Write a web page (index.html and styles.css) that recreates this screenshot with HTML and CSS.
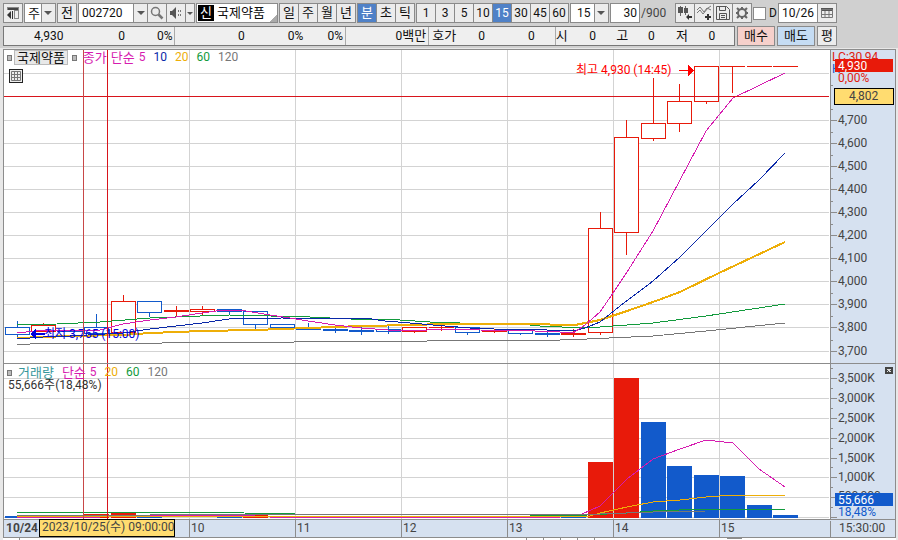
FILE: index.html
```html
<!DOCTYPE html>
<html lang="ko">
<head>
    <meta charset="UTF-8">
    <meta name="viewport" content="width=device-width, initial-scale=1.0">
    <title>국제약품 002720</title>
    <link rel="stylesheet" href="styles.css">
</head>
<body>
    <div class="toolbar">
        <button class="btn icon-btn" aria-label="메뉴">
            <svg width="14" height="14" viewBox="0 0 14 14"><path d="M1 1h12v12H8V4H1z" fill="#888"/><path d="M2 2h10v2H2z" fill="#444"/><path d="M9 5h3v7H9z" fill="#eee"/><path d="M7 5v8L6 13V5zM1 9l4-4v8z" fill="#333"/></svg>
        </button>
        <label class="drop week"><select aria-label="종목 구분"><option>주</option></select></label>
        <button class="btn">전</button>
        <div class="group num">
            <input class="field code-input" type="text" value="002720" aria-label="종목코드">
            <button class="btn arrow" aria-label="최근 종목"></button>
            <button class="btn icon-btn" aria-label="검색">
                <svg width="14" height="14" viewBox="0 0 14 14" fill="none" stroke="#777"><circle cx="5.5" cy="5.5" r="4" stroke-width="1.5"/><path d="M8.500 8.500l4 4" stroke-width="2.5"/></svg>
            </button>
            <button class="btn icon-btn" aria-label="소리">
                <svg width="14" height="14" viewBox="0 0 14 14"><path d="M1 5h2l4-4v12l-4-4H1z" fill="#555"/><path d="M9 4h1v2H9zM11 4h1v2h-1zM9 8h1v2H9zM11 8h1v2h-1z" fill="#777"/></svg>
            </button>
            <button class="btn arrow narrow" aria-label="소리 설정"></button>
        </div>
        <div class="stock"><span class="mark">신</span><span>국제약품</span></div>
        <div class="group">
            <button class="btn">일</button><button class="btn">주</button><button class="btn">월</button><button class="btn">년</button>
        </div>
        <div class="group">
            <button class="btn on">분</button><button class="btn">초</button><button class="btn">틱</button>
        </div>
        <div class="group num">
            <button class="btn">1</button><button class="btn">3</button><button class="btn">5</button><button class="btn">10</button><button class="btn on">15</button><button class="btn">30</button><button class="btn">45</button><button class="btn">60</button>
        </div>
        <label class="drop minute num"><select aria-label="분 간격"><option>15</option></select></label>
        <input class="field count num" type="text" value="30" aria-label="봉 개수">
        <span class="total num">/900</span>
        <div class="group">
            <button class="btn icon-btn" aria-label="봉 추가">
                <svg width="16" height="16" viewBox="0 0 16 16"><path d="M3 1h1v10H3zM8 1h1v9H8z" fill="#666"/><path d="M1 2h5v6H1zM7 3h4v5H7z" fill="#555"/><path d="M9 12l3-3v2h3v2h-3v2z" fill="#333"/></svg>
            </button>
            <button class="btn icon-btn" aria-label="지표 추가">
                <svg width="16" height="16" viewBox="0 0 16 16" fill="none" stroke="#777"><path d="M1 5l3-3 4 5 3-4 4 2M1 8l3-3 3 4 5-6 3-2"/><path d="M12 9v6M9 12h6" stroke="#333" stroke-width="2"/></svg>
            </button>
            <button class="btn icon-btn" aria-label="저장">
                <svg width="14" height="14" viewBox="0 0 14 14" fill="none" stroke="#555"><path d="M.5.5h10l3 3v10H.5zM3.500.5v4h6v-4M3.500 13.500v-6h7v6M5 9.500h4M5 11.500h4"/></svg>
            </button>
            <button class="btn icon-btn" aria-label="설정">
                <svg width="14" height="14" viewBox="0 0 14 14" fill="none" stroke="#666" stroke-width="2"><circle cx="7" cy="7" r="4"/><path d="M7 1v2M7 11v2M1 7h2M11 7h2M2 2l2 2M10 10l2 2M2 12l2-2M10 4l2-2"/></svg>
            </button>
        </div>
        <label class="day num"><input type="checkbox">D</label>
        <div class="group num">
            <input class="field date" type="text" value="10/26" aria-label="날짜">
            <button class="btn icon-btn" aria-label="달력">
                <svg width="12" height="12" viewBox="0 0 12 12"><path d="M0 1h12v3H0z" fill="#555"/><path d="M.5 2.500h11v8H.5zM4 4v6M8 4v6M1 7.500h10" fill="none" stroke="#777"/></svg>
            </button>
        </div>
    </div>

    <div class="quote">
        <div class="strip num">
            <div class="cell price"><span>4,930</span><span>0</span><span>0%</span></div>
            <div class="cell change"><span>0</span><span>0%</span><span>0%</span></div>
            <div class="cell amount"><span>0<b>백만</b></span></div>
            <div class="cell ask"><b>호가</b><span>0</span><span>0</span></div>
            <div class="cell range"><b>시</b><span>0</span><b>고</b><span>0</span><b>저</b><span>0</span></div>
        </div>
        <button class="btn order buy">매수</button>
        <button class="btn order sell">매도</button>
        <button class="btn">평</button>
    </div>

    <div class="pane">
        <svg class="plot" viewBox="0 48 898 315">
            <rect class="paper" x="3" y="49" width="827" height="314"/>
            <rect class="axis" x="830" y="49" width="66" height="314"/>
            <path class="grid" d="M4 73.500H829M4 120.500H829M4 143.500H829M4 166.500H829M4 189.500H829M4 212.500H829M4 235.500H829M4 258.500H829M4 281.500H829M4 304.500H829M4 327.500H829M4 351.500H829"/>
            <path class="grid" d="M189.500 50V363M295.500 50V363M401.500 50V363M507.500 50V363M613.500 50V363M719.500 50V363"/>

            <!-- candles -->
            <g class="down">
                <path d="M17.500 321V337M96.500 314V327M149.500 312V317M229.500 311V315M255.500 324V331M282.500 327V330M308.500 323V327M335.500 325V333M361.500 327V335M388.500 326V334M467.500 332V335M520.500 333V335M547.500 332V337"/>
                <path d="M5.500 327.500h24v7h-24zM57.500 330.500h25v1h-25zM84.500 327.500h24v6h-24zM137.500 301.500h24v11h-24zM217.500 309.500h24v2h-24zM243.500 311.500h24v13h-24zM270.500 324.500h24v3h-24zM296.500 327.500h24v2h-24zM323.500 329.500h24v1h-24zM349.500 330.500h24v1h-24zM376.500 329.500h24v2h-24zM455.500 327.500h24v5h-24zM508.500 330.500h24v3h-24zM535.500 333.500h24v1h-24z"/>
            </g>
            <g class="up">
                <path d="M43.500 323V325M123.500 295V301M176.500 306V316M202.500 306V315M414.500 331V333M441.500 325V331M429 327.500H454M494.500 329V333M573.500 329V337M600.500 212V228M600.500 332V335M626.500 120V137M626.500 232V255M653.500 78V123M653.500 138V141M679.500 84V101M679.500 123V132M706.500 101V104M732.500 66V93M720 66.500H745M747 66.500H772M773 66.500H798"/>
                <path d="M31.500 325.500h24v6h-24zM111.500 301.500h24v31h-24zM164.500 310.500h24v1h-24zM190.500 309.500h24v2h-24zM402.500 327.500h24v4h-24zM482.500 330.500h24v1h-24zM561.500 333.500h24v1h-24zM588.500 228.500h24v104h-24zM614.500 137.500h24v95h-24zM641.500 123.500h24v15h-24zM667.500 101.500h24v22h-24zM694.500 66.500h24v35h-24z"/>
            </g>

            <!-- moving averages 120, 60, 20, 10, 5 -->
            <polyline class="line ma120" points="17,344 30,344 31,343 162,343 163,342 294,342 295,341 427,341 428,340 560,340 561,339 587,339 653,336 706,331 785,323"/>
            <polyline class="line ma60" points="17,325 57,324 100,322 150,318 200,316 229,315 270,316 310,317 350,319 400,320 430,322 460,323 520,324 540,326 562,327 600,327 627,325 653,323 706,316 785,304"/>
            <polyline class="line ma20 thick" points="17,338 70,336 123,335 150,333 202,331 255,330 308,328 361,326 414,325 441,324 540,324 560,325 575,325 585,323 600,320 627,311 653,302 680,292 719,273 785,242"/>
            <polyline class="line ma10" points="17,339 43,337 70,336 123,333 150,329 176,326 202,323 229,319 282,318 335,319 365,318 385,321 410,323 445,326 470,328 494,329 547,330 573,331 585,328 600,322 620,306 653,281 680,257 706,231 733,204 759,180 785,153"/>
            <polyline class="line ma5" points="17,333 43,330 100,330 123,324 150,320 176,317 202,313 223,310 240,310 270,315 290,318 308,321 335,325 361,328 388,330 427,330 430,329 454,329 480,330 535,331 560,332 573,333 585,325 600,312 613,293 627,272 653,231 680,180 706,131 733,98 785,73"/>

            <text class="note low" x="44" y="338">최저 3,765 (15:00)</text>
            <path class="note low" d="M30 334l6-6v5h9v2h-9v5z"/>
            <text class="note high" x="576" y="74">최고 4,930 (14:45)</text>
            <path class="note high" d="M694 71l-6-6v5h-9v1h9v5z"/>

            <path class="cursor" d="M4 96.500H829M107.500 50V363"/>
            <path class="cursor soft" d="M83.500 50V363"/>

            <path class="edge" d="M3.500 363V49.500H895.500V363M830.500 49V363"/>
            <path class="edge" d="M831 120.500h6M831 143.500h6M831 166.500h6M831 189.500h6M831 212.500h6M831 235.500h6M831 258.500h6M831 281.500h6M831 304.500h6M831 327.500h6M831 351.500h6M831 85.500h2M831 109.500h2M831 132.500h2M831 155.500h2M831 178.500h2M831 201.500h2M831 224.500h2M831 247.500h2M831 270.500h2M831 293.500h2M831 316.500h2M831 340.500h2"/>
            <g class="scale">
                <text x="838" y="124">4,700</text>
                <text x="838" y="147">4,600</text>
                <text x="838" y="170">4,500</text>
                <text x="838" y="193">4,400</text>
                <text x="838" y="216">4,300</text>
                <text x="838" y="239">4,200</text>
                <text x="838" y="262">4,100</text>
                <text x="838" y="285">4,000</text>
                <text x="838" y="308">3,900</text>
                <text x="838" y="331">3,800</text>
                <text x="838" y="355">3,700</text>
                <text class="rise" x="832" y="61">LC:30,94</text>
                <text class="fall" x="832" y="73">H</text>
                <text class="rise" x="838" y="82">0,00%</text>
            </g>
            <rect class="tag-up" x="835" y="59" width="58" height="13"/>
            <text class="tag-text" x="838" y="70">4,930</text>
            <rect class="tag-cursor" x="834.5" y="88.5" width="59" height="16"/>
            <text class="scale" x="849" y="100">4,802</text>
        </svg>
        <div class="legend num">
            <i class="dot"></i><button class="name">국제약품</button><i class="dot"></i>
            <span class="c5 ko first">종가</span><span class="c5 ko">단순</span><span class="c5 n">5</span><span class="c10 n">10</span><span class="c20 n">20</span><span class="c60 n">60</span><span class="c120 n">120</span>
        </div>
        <button class="table-btn" aria-label="표 보기">
            <svg width="10" height="10" viewBox="0 0 10 10"><path d="M.5.5h9v9h-9zM3.500 0v10M6.500 0v10M0 3.500h10M0 6.500h10" fill="none" stroke="#777"/></svg>
        </button>
    </div>

    <div class="pane">
        <svg class="plot" viewBox="0 363 898 156">
            <rect class="paper" x="3" y="363" width="827" height="156"/>
            <rect class="axis" x="830" y="363" width="66" height="156"/>
            <path class="grid" d="M4 378.500H829M4 398.500H829M4 418.500H829M4 438.500H829M4 458.500H829M4 477.500H829M4 497.500H829M4 517.500H829"/>
            <path class="grid" d="M189.500 363V519M295.500 363V519M401.500 363V519M507.500 363V519M613.500 363V519M719.500 363V519"/>

            <!-- volume bars -->
            <path class="bar-down" d="M5 516h25v2H5zM57 517h25v1H57zM137 517h25v1h-25zM217 517h25v1h-25zM296 517h25v1h-25zM349 517h25v1h-25zM561 517h25v1h-25zM641 422h25v96h-25zM667 466h25v52h-25zM694 475h25v43h-25zM720 476h25v42h-25zM747 505h25v13h-25zM773 515h25v3h-25z"/>
            <path class="bar-up" d="M31 517h25v1H31zM84 514h25v4H84zM111 513h25v5h-25zM243 515h25v3h-25zM323 517h25v1h-25zM588 462h25v56h-25zM614 378h25v140h-25z"/>
            <polyline class="line ma5" points="17,517 100,517 109,515 240,515 270,517 560,517 582,514 600,506 627,479 653,459 680,449 706,440 733,443 759,469 785,487"/>
            <polyline class="line ma20" points="17,516 590,516 600,513 627,507 653,502 680,500 706,497 733,495 785,495"/>
            <polyline class="line ma60" points="17,512 243,512 244,513 295,514 530,515 587,515 627,513 653,511 706,509 785,509"/>
            <polyline class="line ma120" points="17,515 150,515 300,514 600,514 653,512 706,511 785,511"/>

            <path class="cursor" d="M107.500 363V519"/>
            <path class="cursor soft" d="M83.500 363V519"/>
            <path class="edge" d="M3 363.500H896M3.500 363V519M895.500 363V519M830.500 363V519"/>
            <path class="edge" d="M831 378.500h6M831 398.500h6M831 418.500h6M831 438.500h6M831 458.500h6M831 477.500h6M831 497.500h6M831 517.500h6M831 368.500h2M831 388.500h2M831 408.500h2M831 428.500h2M831 448.500h2M831 467.500h2M831 487.500h2M831 507.500h2"/>
            <g class="scale">
                <text x="838" y="382">3,500K</text>
                <text x="838" y="402">3,000K</text>
                <text x="838" y="422">2,500K</text>
                <text x="838" y="442">2,000K</text>
                <text x="838" y="462">1,500K</text>
                <text x="838" y="481">1,000K</text>
                <text x="838" y="500">500,000</text>
                <text class="fall" x="838" y="516">18,48%</text>
            </g>
            <rect class="tag-down" x="835" y="493" width="58" height="13"/>
            <text class="tag-text" x="838" y="504">55,666</text>
            <rect x="885" y="367" width="8" height="7" fill="#444"/>
            <path d="M887 369l4 3M891 369l-4 3" stroke="#ddd" fill="none"/>
        </svg>
        <div class="legend num">
            <i class="dot"></i><span class="vol ko">거래량</span>
            <span class="c5 ko">단순</span><span class="c5 n">5</span><span class="c20 n">20</span><span class="c60 n">60</span><span class="c120 n">120</span>
        </div>
        <div class="volume-now num">55,666<b>주</b>(18,48%)</div>
    </div>

    <div class="pane">
        <svg class="plot" viewBox="0 519 898 21">
            <rect class="axis" x="3" y="519" width="893" height="19"/>
            <rect class="paper" x="3" y="538" width="893" height="2"/>
            <path class="edge" d="M3 519.500H896M3 537.500H896M3.500 519V538M895.500 519V538M189.500 519V538M295.500 519V538M401.500 519V538M507.500 519V538M613.500 519V538M719.500 519V538M830.500 521V538M727 538.500H742"/>
            <path class="edge" d="M19.500 538v2M526.500 538v2M543.500 538v2M560.500 538v2M577.500 538v2M594.500 538v2"/>
            <g class="scale">
                <text class="bold" x="6" y="532">10/24</text>
                <text x="191" y="532">10</text>
                <text x="297" y="532">11</text>
                <text x="403" y="532">12</text>
                <text x="509" y="532">13</text>
                <text x="615" y="532">14</text>
                <text x="721" y="532">15</text>
                <text x="839" y="532">15:30:00</text>
            </g>
            <rect class="tag-cursor" x="39.5" y="519.5" width="135" height="17"/>
            <text class="scale" x="42" y="531">2023/10/25(수) 09:00:00</text>
        </svg>
    </div>
</body>
</html>
```
FILE: styles.css
```css
* {
    box-sizing: border-box;
}
body {
    margin: 0;
    background-color: #e8e8e8;
    color: #111;
    font-family: Roboto, "Noto Sans CJK KR", sans-serif;
    font-size: 13px;
}
button, input, select {
    margin: 0;
    padding: 0;
    border-radius: 0;
    font: inherit;
    color: inherit;
}
.num {
    font-size: 12px;
}
.toolbar {
    display: flex;
    align-items: center;
    gap: 1px;
    height: 26px;
    padding: 0 62px 0 3px;
    background-color: #d0d0d0;
}
.toolbar > * {
    flex: none;
}
.group {
    display: flex;
}
.btn {
    display: flex;
    align-items: center;
    justify-content: center;
    width: 20px;
    height: 20px;
    border: 1px solid #8a8a8a;
    background-color: #ececec;
    line-height: 18px;
}
.group .btn + .btn,
.group .field + .btn {
    margin-left: -1px;
}
.btn.on {
    background-color: #4f81c7;
    color: white;
}
.field {
    height: 20px;
    border: 1px solid #8a8a8a;
    background-color: white;
}
.code-input {
    width: 56px;
    padding-left: 3px;
}
.arrow {
    width: 15px;
}
.arrow.narrow {
    width: 10px;
}
.arrow::after,
.drop::after {
    content: "";
    border: 4px solid transparent;
    border-top-color: #555;
    border-bottom: 0;
}
.arrow.narrow::after {
    border-width: 3px;
    border-bottom: 0;
}
.drop {
    display: flex;
    align-items: center;
    position: relative;
    height: 20px;
    border: 1px solid #8a8a8a;
    background: linear-gradient(to left, #ececec 13px, #8a8a8a 13px, #8a8a8a 14px, white 14px);
}
.drop::after {
    position: absolute;
    right: 3px;
    pointer-events: none;
}
.drop select {
    width: 100%;
    height: 18px;
    border: 0;
    background: none;
    appearance: none;
}
.week {
    width: 32px;
}
.week select {
    padding-left: 3px;
}
.minute {
    width: 39px;
}
.minute select {
    padding-left: 6px;
}
.stock {
    display: flex;
    align-items: center;
    gap: 3px;
    width: 82px;
    height: 20px;
    padding-left: 1px;
    border: 1px solid #8a8a8a;
    background: linear-gradient(135deg, white 92%, #aaa 92%);
    line-height: 16px;
}
.mark {
    width: 16px;
    height: 16px;
    background-color: black;
    color: white;
    text-align: center;
}
.count {
    width: 30px;
    padding-right: 2px;
    text-align: right;
}
.total {
    width: 33px;
    color: #444;
}
.day {
    display: flex;
    align-items: center;
    gap: 3px;
    width: 24px;
}
.day input {
    width: 13px;
    height: 13px;
    border: 1px solid #8a8a8a;
    background-color: white;
    appearance: none;
}
.date {
    width: 40px;
    padding-left: 3px;
}

.quote {
    display: flex;
    gap: 2px;
    height: 22px;
    padding: 0 61px 2px 3px;
    background-color: #d0d0d0;
}
.strip {
    display: flex;
    flex: 1;
    border: 1px solid #777;
    background-color: #efefef;
    line-height: 18px;
}
.cell {
    display: grid;
    padding-right: 2px;
    text-align: right;
}
.cell + .cell {
    border-left: 1px solid #aaa;
}
.cell b {
    font-weight: normal;
    font-size: 13px;
}
.price {
    flex: 172;
    grid-template-columns: 60fr 62fr 48fr;
}
.change {
    flex: 171;
    grid-template-columns: 70fr 59fr 40fr;
}
.amount {
    flex: 82;
}
.ask {
    flex: 126;
    grid-template-columns: 27fr 29fr 50fr 18fr;
}
.range {
    flex: 180;
    grid-template-columns: 12fr 29fr 33fr 27fr 34fr 28fr 17fr;
}
.order {
    width: 38px;
}
.buy {
    background-color: #f6d0cb;
}
.sell {
    background-color: #c5dcf3;
}

.pane {
    position: relative;
}
.plot {
    display: block;
    width: 100%;
    height: auto;
    font-size: 12px;
    shape-rendering: crispEdges;
}
.paper {
    fill: white;
}
.axis {
    fill: #d6e1f0;
}
.grid {
    stroke: #d3d3d3;
}
.edge {
    fill: none;
    stroke: #8c8c8c;
}
.up, .down {
    fill: white;
    stroke: #e81a0a;
}
.down {
    stroke: #125acb;
}
.bar-up, .tag-up {
    fill: #e81a0a;
}
.bar-down, .tag-down {
    fill: #125acb;
}
.line {
    fill: none;
}
.ma5 {
    stroke: #d61cb0;
}
.ma10 {
    stroke: #0a28a8;
}
.ma20 {
    stroke: #eeae08;
}
.thick {
    stroke-width: 2;
}
.ma60 {
    stroke: #129a3c;
}
.ma120 {
    stroke: #777;
}
.note.high {
    fill: #f00;
}
.note.low {
    fill: #00d;
}
.cursor {
    stroke: #d8141c;
}
.cursor.soft {
    stroke: #c84848;
}
.scale {
    fill: #444;
}
.scale .rise {
    fill: #e02010;
}
.scale .fall {
    fill: #125acb;
}
.bold {
    font-weight: bold;
}
.tag-text {
    fill: white;
}
.tag-cursor {
    fill: #ffdc70;
    stroke: black;
}
.legend {
    display: flex;
    align-items: center;
    gap: 4px;
    position: absolute;
    top: 2px;
    left: 7px;
    line-height: 15px;
}
.ko {
    font-size: 13px;
}
.dot {
    width: 5px;
    height: 6px;
    border: 1px solid #777;
    background-color: #bbb;
}
.name {
    padding: 0 2px;
    margin-left: -2px;
    border: 1px solid #bbb;
    background-color: #e8e8e8;
    font-size: 13px;
    line-height: 13px;
}
.legend .n + .n {
    margin-left: 4px;
}
.first {
    margin-left: 2px;
}
.vol {
    margin: 0 4px 0 2px;
    color: #36979b;
}
.c5 {
    color: #d61cb0;
}
.c10 {
    color: #0a28a8;
}
.c20 {
    color: #eeae08;
}
.c60 {
    color: #129a3c;
}
.c120 {
    color: #777;
}
.table-btn {
    display: flex;
    align-items: center;
    justify-content: center;
    position: absolute;
    top: 21px;
    left: 9px;
    width: 14px;
    height: 14px;
    border: 1px solid #222;
    background-color: #eee;
}
.volume-now {
    position: absolute;
    top: 15px;
    left: 8px;
    color: #333;
    line-height: 15px;
}
.volume-now b {
    font-weight: normal;
}
```
